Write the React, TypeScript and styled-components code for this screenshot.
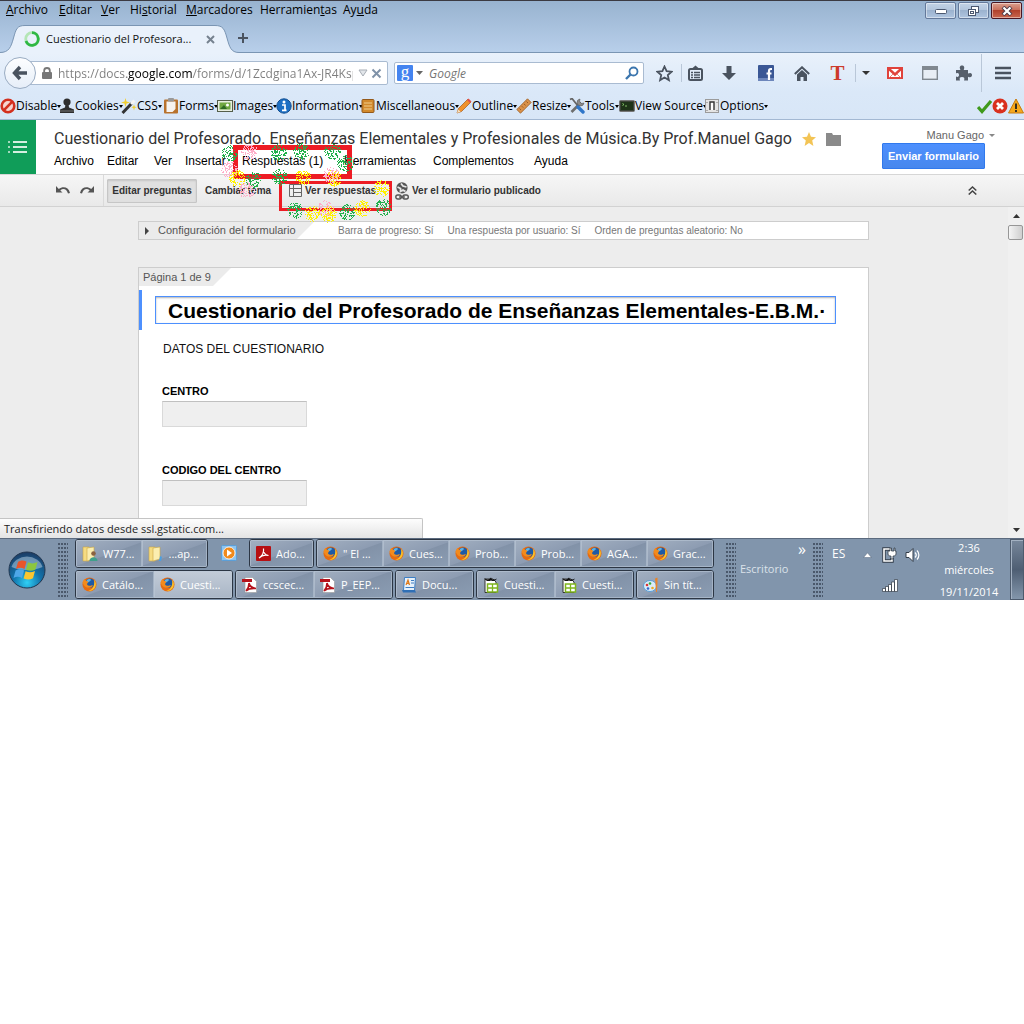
import React from "react";
import styled, { createGlobalStyle, css } from "styled-components";

const ui = `"Open Sans", "Noto Sans", sans-serif`;
const arial = `"Liberation Sans", Arial, sans-serif`;

const Global = createGlobalStyle`
  *, *::before, *::after { box-sizing: border-box; }
  body { margin: 0; background: #fff; font-family: ${arial}; }
  h1, h2, p { margin: 0; }
  button, input { font: inherit; color: inherit; }
  button { border: 0; padding: 0; background: none; white-space: nowrap; cursor: pointer; }
  svg { display: block; flex: none; }
`;

const Screen = styled.div`
  display: flex;
  flex-direction: column;
  width: 100%;
  overflow: hidden;
`;

/* ---------- Window frame ---------- */

const Frame = styled.header`
  border-top: 1px solid #3b3a42;
  border-bottom: 1px solid #7a95b3;
  background: linear-gradient(#98b3d0, #b8cfea);
  font-family: ${ui};
  font-size: 12px;
`;

const FrameTop = styled.div`
  display: flex;
  justify-content: space-between;
  align-items: flex-start;
  height: 24px;
`;

const MenuBar = styled.nav`
  display: flex;
  padding-left: 6px;
`;

const MenuEntry = styled.button<{ $w: number }>`
  width: ${(p) => p.$w}px;
  height: 18px;
  font-size: 12px;
  line-height: 18px;
  text-align: left;
  color: #000;
`;

const WindowControls = styled.div`
  display: flex;
  gap: 2px;
  padding: 1px 2px 0 0;
`;

const WindowButton = styled.button<{ $close?: boolean }>`
  display: grid;
  place-items: center;
  width: 31px;
  height: 17px;
  border: 1px solid ${(p) => (p.$close ? "#4a1622" : "#64799a")};
  border-radius: 2px;
  background: ${(p) =>
    p.$close
      ? "linear-gradient(#dba08f, #c9705c 45%, #b1412c 50%, #c9664f)"
      : "linear-gradient(#c3d3e6, #b3c6dd 45%, #9cb3cf 50%, #afc5e0)"};
  box-shadow: inset 0 0 0 1px rgba(255, 255, 255, 0.45);
`;

const TabStrip = styled.div`
  display: flex;
  align-items: flex-end;
  height: 27px;
`;

const Tab = styled.div`
  position: relative;
  display: flex;
  align-items: center;
  width: 235px;
  height: 28px;
  margin-bottom: -1px;
  padding-left: 24px;
`;

const TabShape = styled.svg`
  position: absolute;
  left: 0;
  top: 0;
`;

const TabLabel = styled.span`
  position: relative;
  width: 162px;
  padding-left: 6px;
  font-size: 11px;
  line-height: 20px;
  white-space: nowrap;
  color: #111;
`;

const Raised = styled.span`
  position: relative;
  display: flex;
`;

const IconButton = styled.button`
  position: relative;
  display: grid;
  place-items: center;
  width: 16px;
  height: 28px;
`;

/* ---------- Navigation bar ---------- */

const Chrome = styled.section`
  border-bottom: 1px solid #a3b8d3;
  background: linear-gradient(#e9f1fb, #dae8f8 60%, #d8e6f7);
  font-family: ${ui};
`;

const NavBar = styled.div`
  display: flex;
  align-items: center;
  height: 40px;
  padding-left: 4px;
`;

const Back = styled.button`
  display: grid;
  place-items: center;
  flex: none;
  z-index: 1;
  width: 32px;
  height: 32px;
  border: 1px solid #9aacc2;
  border-radius: 50%;
  background: linear-gradient(#fdfeff, #e6eef8);
`;

const AddressBar = styled.form`
  display: flex;
  align-items: center;
  flex: 1;
  min-width: 0;
  height: 24px;
  margin: 0 6px 0 -8px;
  padding: 0 3px 0 13px;
  border: 1px solid #a9bbd1;
  border-radius: 2px;
  background: #fff;
`;

const Address = styled.input`
  flex: 1;
  min-width: 0;
  height: 20px;
  margin: 0 5px 0 6px;
  padding: 0;
  border: 0;
  outline: 0;
  font-size: 12px;
  color: #7d7d7d;
  -webkit-text-fill-color: transparent;
  background: linear-gradient(90deg, #7d7d7d 69px, #000 69px 134px, #7d7d7d 134px);
  -webkit-background-clip: text;
  background-clip: text;
`;

const SearchBar = styled.form`
  display: flex;
  align-items: center;
  flex: none;
  width: 250px;
  height: 22px;
  padding: 0 4px 0 2px;
  border: 1px solid #a9bbd1;
  border-radius: 2px;
  background: #fff;
`;

const Engine = styled.button`
  display: flex;
  align-items: center;
  gap: 3px;
`;

const EngineLogo = styled.span`
  width: 16px;
  height: 16px;
  border-radius: 1px;
  background: #4484f0;
  color: #fff;
  font-family: "Liberation Serif", serif;
  font-size: 17px;
  line-height: 13px;
  text-align: center;
`;

const SearchInput = styled.input`
  flex: 1;
  min-width: 0;
  height: 18px;
  padding: 0 6px;
  border: 0;
  outline: 0;
  background: none;
  font-size: 12px;
  &::placeholder {
    color: #757575;
    font-style: italic;
    opacity: 1;
  }
`;

const Tools = styled.div`
  display: flex;
  align-items: center;
  flex: none;
  height: 40px;
  margin-left: 4px;
`;

const Tool = styled.button<{ $w: number }>`
  display: grid;
  place-items: center;
  width: ${(p) => p.$w}px;
  height: 28px;
`;

const ToolRule = styled.span<{ $tall?: boolean }>`
  width: 1px;
  height: ${(p) => (p.$tall ? 38 : 18)}px;
  background: #b9c7d8;
`;

const LetterT = styled.span`
  font-family: "Liberation Serif", serif;
  font-weight: bold;
  font-size: 21px;
  line-height: 20px;
  color: #cc3a2b;
`;

/* ---------- Developer toolbar ---------- */

const DevBar = styled.div`
  display: flex;
  align-items: center;
  height: 26px;
`;

const DevButton = styled.button<{ $w: number }>`
  display: flex;
  align-items: center;
  flex: none;
  width: ${(p) => p.$w}px;
  height: 20px;
  font-size: 12px;
  line-height: 20px;
  color: #000;
`;

const DevCaret = styled.span`
  border: 2px solid transparent;
  border-top: 3px solid #000;
  border-bottom: 0;
`;

const DevStatus = styled.div`
  display: flex;
  margin-left: auto;
`;

/* ---------- Forms header ---------- */

const FormsHeader = styled.header`
  display: flex;
  border-bottom: 1px solid #d6d6d6;
  background: #fff;
`;

const HomeTile = styled.a`
  display: grid;
  place-items: center;
  flex: none;
  width: 36px;
  height: 54px;
  background: #109d59;
`;

const HeaderMain = styled.div`
  flex: 1;
  min-width: 0;
  padding: 8px 0 0 18px;
`;

const TitleRow = styled.div`
  display: flex;
  align-items: center;
  gap: 10px;
  height: 22px;
`;

const DocTitle = styled.h1`
  font-family: Roboto, ${arial};
  font-size: 16px;
  line-height: 22px;
  font-weight: normal;
  white-space: nowrap;
  color: #333;
`;

const DocMenu = styled.nav`
  display: flex;
  padding-top: 3px;
`;

const DocMenuItem = styled.button<{ $w: number }>`
  width: ${(p) => p.$w}px;
  font-size: 12px;
  line-height: 16px;
  text-align: left;
  color: #000;
`;

const Account = styled.div`
  display: flex;
  flex-direction: column;
  align-items: flex-end;
  padding-right: 39px;
`;

const AccountName = styled.button`
  display: flex;
  align-items: center;
  gap: 5px;
  height: 16px;
  margin: 7px -10px 0 0;
  font-size: 11px;
  color: #666;
`;

const SendButton = styled.button`
  width: 103px;
  height: 26px;
  border: 1px solid #3079ed;
  border-radius: 1px;
  background: linear-gradient(#4d90fe, #4787ed);
  font-size: 11px;
  font-weight: bold;
  color: #fff;
`;

const Toolbar = styled.div`
  display: flex;
  align-items: center;
  height: 32px;
  border-bottom: 1px solid #d2d2d2;
  background: linear-gradient(#f6f6f6, #e9e9e9);
`;

const History = styled.div`
  display: flex;
  align-items: center;
  justify-content: flex-end;
  gap: 8px;
  width: 104px;
  height: 31px;
  padding-right: 8px;
  border-right: 1px solid #dadada;
`;

const ToolbarButton = styled.button<{ $pressed?: boolean; $w: number }>`
  display: flex;
  align-items: center;
  gap: 3px;
  width: ${(p) => p.$w}px;
  height: 24px;
  font-size: 10px;
  font-weight: bold;
  color: #333;
  ${(p) =>
    p.$pressed &&
    css`
      justify-content: center;
      margin: 0 8px 0 3px;
      border: 1px solid #c6c6c6;
      border-radius: 1px;
      background: #e0e0e0;
      box-shadow: inset 0 1px 2px rgba(0, 0, 0, 0.12);
    `}
`;

const CollapseButton = styled(IconButton)`
  margin: 0 44px 0 auto;
`;

/* ---------- Canvas ---------- */

const Viewport = styled.main`
  position: relative;
  display: flex;
  height: 331px;
  overflow: hidden;
  background: #ededed;
`;

const Canvas = styled.div`
  flex: 1;
  min-width: 0;
  padding: 14px 139px 0 138px;
`;

const SettingsBar = styled.div`
  display: flex;
  height: 19px;
  border: 1px solid #cdcdcd;
  background: #fff;
  font-size: 10px;
  line-height: 17px;
  white-space: nowrap;
  color: #777;
`;

const SettingsToggle = styled.button`
  display: flex;
  align-items: center;
  gap: 9px;
  width: 175px;
  padding-left: 6px;
  background: #ebebeb;
  clip-path: polygon(0 0, 100% 0, calc(100% - 17px) 100%, 0 100%);
  font-size: 11px;
  color: #555;
`;

const Setting = styled.span`
  margin-left: 14px;
  &:nth-of-type(1) { margin-left: 24px; }
`;

const Sheet = styled.section`
  height: 320px;
  margin-top: 27px;
  border: 1px solid #cdcdcd;
  background: #fff;
`;

const PageTag = styled.h2`
  width: 92px;
  height: 18px;
  padding-left: 4px;
  background: #ebebeb;
  clip-path: polygon(0 0, 100% 0, calc(100% - 18px) 100%, 0 100%);
  font-size: 11px;
  line-height: 19px;
  font-weight: normal;
  color: #555;
`;

const TitleBlock = styled.div`
  height: 40px;
  margin-top: 4px;
  padding: 6px 32px 6px 13px;
  border-left: 3px solid #4d90fe;
`;

const TitleInput = styled.input`
  display: block;
  width: 100%;
  height: 28px;
  padding: 1px 6px 0 12px;
  border: 1px solid #4d90fe;
  outline: 0;
  box-shadow: inset 0 1px 2px rgba(0, 0, 0, 0.3);
  background: #fff;
  font-size: 21px;
  font-weight: bold;
  color: #000;
`;

const Description = styled.p`
  padding: 11px 24px 0;
  font-size: 12px;
  line-height: 16px;
  color: #111;
`;

const Question = styled.div`
  display: flex;
  flex-direction: column;
  align-items: flex-start;
  gap: 2px;
  padding: 26px 0 0 23px;
  & + & { padding-top: 35px; }
`;

const QuestionLabel = styled.label`
  font-size: 11px;
  line-height: 16px;
  font-weight: bold;
  color: #000;
`;

const Answer = styled.input`
  width: 145px;
  height: 26px;
  border: 1px solid #d9d9d9;
  border-top-color: #c0c0c0;
  background: #efefef;
`;

const ScrollBar = styled.div`
  display: flex;
  flex-direction: column;
  width: 16px;
  background: #f0f0f0;
`;

const ScrollArrow = styled.button`
  display: grid;
  place-items: center;
  height: 17px;
`;

const ScrollThumb = styled.div`
  flex: none;
  width: 15px;
  height: 15px;
  margin-top: 1px;
  border: 1px solid #979797;
  border-radius: 2px;
  background: linear-gradient(90deg, #f5f5f5, #e2e2e2 50%, #cfcfcf);
`;

const ScrollTrack = styled.div`
  flex: 1;
`;

const StatusText = styled.p`
  position: absolute;
  left: 0;
  bottom: 0;
  width: 423px;
  height: 20px;
  padding-left: 4px;
  border: 1px solid #c4c4c4;
  border-width: 1px 1px 0 0;
  border-radius: 0 2px 0 0;
  background: linear-gradient(#fdfdfd, #e4e4e4);
  font-family: ${ui};
  font-size: 11px;
  line-height: 20px;
  color: #222;
`;

/* ---------- Marks drawn over the page ---------- */

const Marks = styled.svg`
  position: absolute;
  left: 220px;
  top: 140px;
  pointer-events: none;
`;

/* ---------- Taskbar ---------- */

const TaskBar = styled.footer`
  display: flex;
  height: 62px;
  border-top: 1px solid #5b6a7e;
  background: #8195ac;
  font-family: ${ui};
  font-size: 11px;
  color: #fff;
`;

const Start = styled.button`
  display: grid;
  place-items: center;
  width: 54px;
  height: 61px;
`;

const Grip = styled.span<{ $l: number; $r: number }>`
  flex: none;
  width: 10px;
  height: 54px;
  margin: 4px ${(p) => p.$r}px 0 ${(p) => p.$l}px;
  background: radial-gradient(circle at 1px 1px, #4a586b 1px, transparent 1px) 0 0 / 3px 4px;
`;

const TaskRows = styled.div`
  display: flex;
  flex-direction: column;
  gap: 2px;
`;

const TaskRow = styled.div`
  display: flex;
  gap: 2px;
`;

const TaskGroup = styled.div<{ $w: number }>`
  display: flex;
  width: ${(p) => p.$w}px;
  height: 29px;
  border: 1px solid #2c3644;
  border-radius: 3px;
  box-shadow: inset 0 0 0 1px #b4c0cf;
  overflow: hidden;
`;

const Task = styled.button<{ $active?: boolean }>`
  display: flex;
  align-items: center;
  gap: 5px;
  flex: 1;
  min-width: 0;
  padding-left: 6px;
  color: #fff;
  box-shadow: inset 0 0 0 1px rgba(190, 202, 216, 0.55);
  background: ${(p) =>
    p.$active
      ? "linear-gradient(#c3ccd8, #a9b6c6)"
      : "linear-gradient(160deg, #a3b0c1, #8d9cb2 50%, #8292a8 52%, #8b9db3)"};
`;

const QuickTask = styled.button`
  display: grid;
  place-items: center;
  width: 37px;
  height: 27px;
`;

const Desktop = styled.div`
  display: flex;
  flex-direction: column;
  gap: 2px;
  width: 66px;
  line-height: 16px;
  color: #dbe2ea;
`;

const More = styled.button`
  align-self: flex-end;
  height: 20px;
  font-size: 16px;
  line-height: 16px;
  color: #fff;
`;

const Tray = styled.div`
  display: flex;
  margin-left: auto;
`;

const Lang = styled.span`
  width: 30px;
  padding-top: 7px;
  font-size: 12px;
  line-height: 16px;
`;

const TrayArrow = styled.button`
  display: grid;
  place-items: center;
  width: 10px;
  height: 32px;
`;

const TrayIcons = styled.div`
  display: grid;
  grid-template-columns: 23px 23px;
  grid-template-rows: 31px 30px;
  align-items: center;
  margin-left: 10px;
`;

const Clock = styled.time`
  display: flex;
  flex-direction: column;
  gap: 6px;
  width: 82px;
  padding-top: 1px;
  line-height: 16px;
  text-align: center;
`;

const ShowDesktop = styled.button`
  width: 14px;
  height: 61px;
  border: 1px solid #4d5b6d;
  box-shadow: inset 1px 1px 0 #a3b1c2;
  background: linear-gradient(#77879b, #4e5e73 50%, #8396ab);
`;

/* ---------- Drawings ---------- */

const slate = "#4a535f";

function Firefox() {
  return (
    <svg width="15" height="15" viewBox="0 0 16 16">
      <circle cx="8" cy="8" r="7.5" fill="#e66b12" />
      <circle cx="8.6" cy="6.6" r="5" fill="#1d5aa6" />
      <path d="M5 3.500c2-1.800 4-1.500 5 0-1 .4-2 .4-2 1.600L5.500 6z" fill="#5fb4e6" />
      <path d="M.6 6C1 4 2 2.500 3.200 1.800 3 3 3.600 4 5 4.300L6.800 5 5.600 6.800c-.6 1 .4 2.400 2 2.600 2 .2 3-.8 4-.4-1 2-3.500 3-5.600 2.400C3 10.600 1.500 8 .6 6z" fill="#f28b1d" />
      <path d="M13 3c2.200 2.600 2.400 6 .6 8.700-1.600 2.400-4.600 3.600-7.200 3 4-.4 7.400-4 6.600-11.700z" fill="#f9c22b" />
    </svg>
  );
}

function Folder({ person }: { person?: boolean }) {
  return (
    <svg width="16" height="16" viewBox="0 0 16 16">
      <path d="M1 1h6v14H1z" fill="#f5dc82" stroke="#c9a544" strokeWidth=".6" />
      <path d="M5 2l7-1v12l-7 2z" fill="#fbeeb0" stroke="#c9a544" strokeWidth=".6" />
      {person ? (
        <>
          <circle cx="11.500" cy="7.500" r="2.300" fill="#8a6240" />
          <path d="M7.500 15c0-5 8-5 8 0z" fill="#3fa08b" />
        </>
      ) : (
        <path d="M12 10l2 1-1 4h-2z" fill="#4c9fe0" />
      )}
    </svg>
  );
}

function PdfPage() {
  return (
    <svg width="16" height="16" viewBox="0 0 16 16">
      <path d="M3 .5h7.500l4 4v11H3z" fill="#fff" stroke="#999" strokeWidth=".6" />
      <path d="M0 2h10v3H0z" fill="#b5121b" />
      <path d="M7 6c1 4 3 5 7 5.500M7 6c0 4-1 6-3 8 2-2 5-3 10-2.500" fill="none" stroke="#b5121b" strokeWidth="1.600" />
    </svg>
  );
}

function Acrobat() {
  return (
    <svg width="15" height="15" viewBox="0 0 15 15">
      <rect width="15" height="15" rx="1" fill="#b70f12" />
      <path d="M3 12c3-2 5-6 4.500-9.500C7 6 9 9 12.500 9.500 9 8.500 6 9 3 12z" fill="none" stroke="#fff" strokeWidth="1.200" />
    </svg>
  );
}

function Player() {
  return (
    <svg width="16" height="16" viewBox="0 0 16 16">
      <rect x=".5" y=".5" width="15" height="15" rx="1" fill="#8fc4ee" stroke="#5b9fd8" />
      <circle cx="8" cy="8" r="6" fill="#f08a1c" stroke="#fff" strokeWidth=".8" />
      <path d="M6 4.500l5 3.500-5 3.500z" fill="#fff" />
    </svg>
  );
}

function WordPad() {
  return (
    <svg width="15" height="16" viewBox="0 0 15 16">
      <path d="M2.500 .5h11l-1 13h-11z" fill="#e6f1fb" stroke="#3e7fc4" />
      <path d="M0 13h13l1 2.500H1z" fill="#2f6fb5" />
      <path d="M4 8l2-5 1.500 5M4.800 6.300h2.200" fill="none" stroke="#e07b1a" strokeWidth="1.200" />
      <path d="M9 3.500h3M9 6h3M3.500 10.500h8.500" stroke="#3e7fc4" strokeWidth="1.200" />
    </svg>
  );
}

function Calc() {
  return (
    <svg width="16" height="16" viewBox="0 0 16 16">
      <path d="M2 2h8l3 3v10.500H2z" fill="#fff" stroke="#333" />
      <path d="M1 1c3 2 5 2 7-.5 1 3 4 2 6 1-2 3-4 3-6 2-2 1-5 1-7-2.500z" fill="#111" />
      <rect x="4.500" y="7" width="10" height="8" fill="#fff" stroke="#7fb51e" strokeWidth="1.500" />
      <path d="M9.500 7v8M4.500 11h10" stroke="#7fb51e" strokeWidth="1.300" />
    </svg>
  );
}

function Paint() {
  return (
    <svg width="16" height="16" viewBox="0 0 16 16">
      <ellipse cx="7" cy="9" rx="6.500" ry="5.500" fill="#d9ecf8" stroke="#5b9fd8" />
      <circle cx="4" cy="8" r="1.300" fill="#d33" />
      <circle cx="7" cy="6.500" r="1.300" fill="#3a3" />
      <circle cx="5" cy="11.500" r="1.300" fill="#36c" />
      <circle cx="9.500" cy="11" r="1.300" fill="#ea2" />
      <path d="M12 1.500l2.500-1V6l-.5 9h-1l-.5-9z" fill="#e8842a" />
    </svg>
  );
}

function StartOrb() {
  return (
    <svg width="38" height="38" viewBox="0 0 38 38">
      <defs>
        <radialGradient id="orb" cx="50%" cy="85%" r="85%">
          <stop offset="0" stopColor="#2fd0f5" />
          <stop offset=".45" stopColor="#1273ab" />
          <stop offset="1" stopColor="#1d3b63" />
        </radialGradient>
      </defs>
      <circle cx="19" cy="19" r="18" fill="url(#orb)" stroke="#22364f" />
      <path d="M3.500 16a16 14 0 0 1 31 0c-8 4-23 4-31 0z" fill="#d5e2ef" opacity=".45" />
      <path d="M10 11c3-2 5-2 8.500-.4L16.500 18c-3-1.600-5.500-1.500-8.500 0z" fill="#e8552b" />
      <path d="M20 11.300c3 1.500 6 1.500 9.500-.3L27.400 18.500c-3 1.600-6 1.700-9.400.2z" fill="#8cc63e" />
      <path d="M7.600 19.500c3-1.600 5.500-1.500 8.500 0L14 27c-3-1.600-5.500-1.500-8.500 0z" fill="#4ea7e8" />
      <path d="M17.600 20.200c3 1.500 6 1.500 9.400-.3L25 27.300c-3 1.700-6 1.700-9.400.2z" fill="#fbc62f" />
    </svg>
  );
}

const devIcons: Record<string, React.ReactNode> = {
  Disable: (
    <>
      <circle cx="8" cy="8" r="6.300" fill="#f6d5d0" stroke="#d3301f" strokeWidth="2.600" />
      <path d="M12.300 3.700l-8.600 8.600" stroke="#d3301f" strokeWidth="2.600" />
    </>
  ),
  Cookies: (
    <>
      <circle cx="8" cy="4" r="3.600" fill="#2e2e2e" />
      <path d="M6.500 6h3l.5 3.500 5 2v3.500H1v-3.500l5-2z" fill="#2e2e2e" />
      <path d="M1 13h14" stroke="#777" />
    </>
  ),
  CSS: (
    <>
      <path d="M1.500 15L11 5" stroke="#333" strokeWidth="3" />
      <path d="M10 6l3.500-3.500" stroke="#f4f4f4" strokeWidth="3" />
      <path d="M4.500 0l1 3.500 3.500 1-3.500 1-1 3.500-1-3.500-3.500-1 3.500-1zM13 6.500l.7 2 2 .7-2 .7-.7 2.600-.7-2.600-2-.7 2-.7z" fill="#f2cf2e" />
    </>
  ),
  Forms: (
    <>
      <rect x="1" y="1.500" width="14" height="14" rx="1" fill="#b8722c" />
      <path d="M3.500 3.500h9V11l-3 3h-6z" fill="#f6f3ef" />
      <rect x="5" y="0" width="6" height="3.500" rx="1" fill="#999" />
    </>
  ),
  Images: (
    <>
      <rect x=".5" y="2.500" width="15" height="11" fill="#e9efe2" stroke="#555f4b" />
      <rect x="2.500" y="4.500" width="11" height="7" fill="#72a843" />
      <path d="M3 11l4-4 3 4z" fill="#2f6b25" />
      <circle cx="10.500" cy="7" r="1.500" fill="#fff" />
    </>
  ),
  Information: (
    <>
      <circle cx="8" cy="8" r="7.200" fill="#1c6fc4" stroke="#124f91" />
      <circle cx="8" cy="4" r="1.500" fill="#fff" />
      <path d="M6 7h3v5h1.200M6 12.400h4.500" fill="none" stroke="#fff" strokeWidth="1.700" />
    </>
  ),
  Miscellaneous: (
    <>
      <rect x="2" y="1.500" width="12" height="13" rx="1" fill="#d28a2d" stroke="#94591a" />
      <path d="M4 5h8M4 8h8M4 11h8" fill="none" stroke="#f0cd8c" />
    </>
  ),
  Outline: (
    <>
      <path d="M1 15l1.500-4.500L12 1l3 3-9.500 9.500z" fill="#f0922c" stroke="#a5591b" strokeWidth=".7" />
      <path d="M11 2l1.500-1.500 3 3L14 5z" fill="#e2504b" />
      <path d="M1 15l1.200-3.600 2.500 2.400z" fill="#f5e2c3" />
    </>
  ),
  Resize: (
    <>
      <path d="M.8 11.500L11.500.8l3.700 3.700L4.500 15.200z" fill="#d99149" stroke="#9b5c22" strokeWidth=".8" />
      <path d="M5 12l-1.500-1.500M7.300 9.700L5.800 8.200M9.600 7.400L8 6M12 5l-1.500-1.500" stroke="#8a4f1b" strokeWidth=".8" />
    </>
  ),
  Tools: (
    <>
      <path d="M2.500 14L12 4.500" stroke="#6e6e6e" strokeWidth="2.600" />
      <path d="M11 1a3.500 3.500 0 1 0 4 4l-2.500.5-2-2z" fill="#8a8a8a" stroke="#555" strokeWidth=".6" />
      <path d="M1 1.500l2-1 6 7.500" stroke="#666" strokeWidth="1.800" fill="none" />
      <path d="M9 9l5 5" stroke="#2f76c9" strokeWidth="3.400" strokeLinecap="round" />
    </>
  ),
  "View Source": (
    <>
      <rect x=".5" y="2.500" width="15" height="11" rx="1" fill="#3c4338" stroke="#777" />
      <rect x="2" y="4" width="12" height="8" fill="#1e3318" />
      <path d="M3.500 5.500l1.500 1-1.500 1M6 8h2" stroke="#8fd070" fill="none" strokeWidth=".9" />
    </>
  ),
  Options: (
    <>
      <rect x="1.500" y="1.500" width="13" height="13" fill="#e4e4e4" stroke="#9b9b9b" />
      <path d="M6 12V4h4v8" fill="#fff" stroke="#333" strokeWidth="1.400" />
      <path d="M3 4v1M13 4v1M3 12v1M13 12v1" stroke="#777" />
    </>
  ),
};

const devItems: [string, number][] = [
  ["Disable", 59], ["Cookies", 62], ["CSS", 42], ["Forms", 54], ["Images", 59], ["Information", 84],
  ["Miscellaneous", 96], ["Outline", 60], ["Resize", 53], ["Tools", 50], ["View Source", 85], ["Options", 66],
];

const menus: [string, string, string, number][] = [
  ["", "A", "rchivo", 53], ["", "E", "ditar", 42], ["", "V", "er", 29], ["Hi", "s", "torial", 56],
  ["", "M", "arcadores", 74], ["Herramien", "t", "as", 83], ["Ay", "u", "da", 40],
];

const docMenus: [string, number][] = [
  ["Archivo", 53], ["Editar", 47], ["Ver", 31], ["Insertar", 57], ["Respuestas (1)", 102],
  ["Herramientas", 89], ["Complementos", 101], ["Ayuda", 36],
];

const sprays: [number, number, string][] = [
  [229, 153, "#22b14c"], [229, 169, "#ffaec9"], [249, 152, "#ffaec9"], [278, 152, "#22b14c"], [301, 151, "#22b14c"],
  [332, 151, "#22b14c"], [345, 163, "#22b14c"], [237, 178, "#fff200"], [253, 179, "#22b14c"], [279, 177, "#22b14c"],
  [303, 177, "#fff200"], [333, 178, "#fff200"], [331, 175, "#ffaec9"], [246, 190, "#ffaec9"], [381, 188, "#fff200"],
  [295, 210, "#22b14c"], [312, 213, "#fff200"], [325, 208, "#ffaec9"], [328, 214, "#fff200"], [347, 212, "#22b14c"],
  [362, 208, "#fff200"], [383, 207, "#22b14c"],
];

function sprayPath(cx: number, cy: number, seed: number) {
  let s = seed * 7919 + 17;
  const rnd = () => {
    s = (s * 1103515245 + 12345) % 2147483648;
    return s / 2147483648;
  };
  let d = "";
  for (let i = 0; i < 105; i++) {
    const a = rnd() * Math.PI * 2;
    const r = Math.sqrt(rnd()) * 8;
    d += `M${Math.round(cx - 220 + r * Math.cos(a))} ${Math.round(cy - 140 + r * Math.sin(a))}h1v1h-1z`;
  }
  return d;
}

function TaskItem({ icon, label, active }: { icon: React.ReactNode; label: string; active?: boolean }) {
  return (
    <Task $active={active}>
      {icon}
      {label}
    </Task>
  );
}

export default function App() {
  return (
    <Screen>
      <Global />
      <Frame>
        <FrameTop>
          <MenuBar>
            {menus.map(([a, key, b, w]) => (
              <MenuEntry key={key} $w={w}>{a}<u>{key}</u>{b}</MenuEntry>
            ))}
          </MenuBar>
          <WindowControls>
            <WindowButton aria-label="Minimizar">
              <svg width="12" height="6"><rect x=".5" y="1.500" width="11" height="4" rx="1" fill="#fff" stroke="#4b5870" /></svg>
            </WindowButton>
            <WindowButton aria-label="Restaurar">
              <svg width="13" height="12" fill="#fff" stroke="#4b5870">
                <rect x="4.500" y="1.500" width="7" height="6" /><rect x="1.500" y="4.500" width="7" height="6" /><rect x="3.500" y="6.500" width="3" height="2" />
              </svg>
            </WindowButton>
            <WindowButton $close aria-label="Cerrar">
              <svg width="12" height="10"><path d="M2 1l8 8M10 1L2 9" stroke="#4b3a48" strokeWidth="4" /><path d="M2.500 1.500l7 7M9.500 1.500l-7 7" stroke="#fff" strokeWidth="2.200" /></svg>
            </WindowButton>
          </WindowControls>
        </FrameTop>
        <TabStrip>
          <Tab>
            <TabShape width="240" height="28">
              <path d="M0 27.500C9 27.500 11 22 13.500 13S17 .5 25 .5H215C223 .5 224.500 4 227 13S231 27.500 239 27.500V28H0z" fill="#e9f1fb" />
              <path d="M0 27.500C9 27.500 11 22 13.500 13S17 .5 25 .5H215C223 .5 224.500 4 227 13S231 27.500 239 27.500" fill="none" stroke="#7a95b3" />
            </TabShape>
            <Raised>
              <svg width="16" height="16" fill="none" strokeWidth="2.800">
                <circle cx="8" cy="8" r="6.300" stroke="#b4e6b6" />
                <path d="M8 1.700A6.300 6.300 0 1 1 2 10" stroke="#2fb844" />
              </svg>
            </Raised>
            <TabLabel>Cuestionario del Profesora...</TabLabel>
            <IconButton aria-label="Cerrar pestaña">
              <svg width="9" height="9"><path d="M1 1l7 7M8 1L1 8" stroke="#76828f" strokeWidth="2" /></svg>
            </IconButton>
          </Tab>
          <IconButton aria-label="Nueva pestaña">
            <svg width="12" height="12"><path d="M6 1v10M1 6h10" stroke={slate} strokeWidth="2" /></svg>
          </IconButton>
        </TabStrip>
      </Frame>

      <Chrome>
        <NavBar>
          <Back aria-label="Atrás">
            <svg width="16" height="16"><path d="M8 2L2.500 8 8 14M3 8h12" fill="none" stroke={slate} strokeWidth="3.400" /></svg>
          </Back>
          <AddressBar onSubmit={(e) => e.preventDefault()}>
            <svg width="10" height="12"><rect y="5" width="10" height="7" rx="1" fill="#777" /><path d="M2.200 6V3.500a2.800 2.500 0 0 1 5.600 0V6" fill="none" stroke="#777" strokeWidth="1.800" /></svg>
            <Address aria-label="Dirección" defaultValue="https://docs.google.com/forms/d/1Zcdgina1Ax-JR4KspLm8" />
            <svg width="10" height="8"><path d="M1 1h8L5 7z" fill="#e2e6ea" stroke="#a7adb5" /></svg>
            <IconButton type="button" aria-label="Detener">
              <svg width="11" height="11"><path d="M1.500 1.500l8 8M9.500 1.500l-8 8" stroke="#7f92a8" strokeWidth="2" /></svg>
            </IconButton>
          </AddressBar>
          <SearchBar onSubmit={(e) => e.preventDefault()}>
            <Engine type="button" aria-label="Motor de búsqueda">
              <EngineLogo>g</EngineLogo>
              <svg width="7" height="4"><path d="M0 0h7L3.500 4z" fill="#666" /></svg>
            </Engine>
            <SearchInput aria-label="Buscar" placeholder="Google" />
            <svg width="14" height="14" fill="none" stroke="#3c76ae"><circle cx="8.500" cy="5.500" r="4" strokeWidth="1.800" /><path d="M5.500 8.500L1 13" strokeWidth="2.400" /></svg>
          </SearchBar>
          <Tools>
            <Tool $w={33} aria-label="Marcador">
              <svg width="17" height="17" viewBox="0 0 17 17"><path d="M8.500 1.500l2.100 4.700 5 .5-3.800 3.400 1.100 5-4.400-2.600-4.400 2.600 1.100-5L1.400 6.700l5-.5z" fill="none" stroke={slate} strokeWidth="1.800" /></svg>
            </Tool>
            <ToolRule />
            <Tool $w={27} aria-label="Lista">
              <svg width="15" height="16"><rect x="1" y="4" width="13" height="11" rx="1.500" fill="none" stroke={slate} strokeWidth="2" /><path d="M4 3.500L7.500.5 11 3.500z" fill={slate} /><path d="M3 7.500h2M6 7.500h6M3 10h2M6 10h6M3 12.500h2M6 12.500h6" stroke={slate} strokeWidth="1.300" /></svg>
            </Tool>
            <Tool $w={39} aria-label="Descargas">
              <svg width="14" height="15"><path d="M4.500 0h5v7H14l-7 7-7-7h4.500z" fill={slate} /></svg>
            </Tool>
            <Tool $w={36} aria-label="Facebook">
              <svg width="16" height="16"><rect width="16" height="16" rx="1" fill="#3a5795" /><rect y="13" width="16" height="3" fill="#6d86bb" /><path d="M14 4h-1.200c-1.300 0-1.800.7-1.800 2V15M8.500 8.500h5" fill="none" stroke="#fff" strokeWidth="2.200" /></svg>
            </Tool>
            <Tool $w={36} aria-label="Inicio">
              <svg width="16" height="15"><path d="M.8 8L8 1.300 15.200 8" fill="none" stroke={slate} strokeWidth="2" /><path d="M3 8.500l5-4.500 5 4.500V15H9.500v-4h-3v4H3z" fill={slate} /></svg>
            </Tool>
            <Tool $w={35} aria-label="Texto"><LetterT>T</LetterT></Tool>
            <ToolRule />
            <Tool $w={20} aria-label="Más">
              <svg width="8" height="4"><path d="M0 0h8L4 4z" fill="#333" /></svg>
            </Tool>
            <Tool $w={38} aria-label="Gmail">
              <svg width="16" height="12"><rect x="1" y="1" width="14" height="10" fill="#fff" stroke="#e0433c" strokeWidth="2" /><path d="M1.500 1.500L8 7.500l6.500-6" fill="none" stroke="#e0433c" strokeWidth="2.400" /><path d="M2.500 10.500l3.500-3.500M13.500 10.500L10 7" stroke="#e9857f" /></svg>
            </Tool>
            <Tool $w={32} aria-label="Ventana">
              <svg width="16" height="14"><rect x=".7" y=".7" width="14.600" height="12.600" fill="#e8eef5" stroke="#808890" strokeWidth="1.400" /><path d="M0 2.500h16" stroke="#808890" strokeWidth="3" /></svg>
            </Tool>
            <Tool $w={35} aria-label="Complementos">
              <svg width="17" height="16"><path d="M1 5h4.500C4 2 5 .5 7 .5S10 2 8.700 5H13v3.500c3-1.500 4 0 4 1.500s-1 3-4 1.700V15.500H9c1-2.500 0-3.500-2-3.500s-3 1-2 3.500H1v-4c2 1 3 0 3-1.500S3 7.500 1 8.500z" fill="#565f6b" /></svg>
            </Tool>
            <ToolRule $tall />
            <Tool $w={42} aria-label="Menú">
              <svg width="16" height="14"><path d="M0 2h16M0 7h16M0 12h16" stroke={slate} strokeWidth="2.600" /></svg>
            </Tool>
          </Tools>
        </NavBar>
        <DevBar>
          {devItems.map(([name, w]) => (
            <DevButton key={name} $w={w}>
              <svg width="16" height="16" viewBox="0 0 16 16">{devIcons[name]}</svg>
              {name}
              <DevCaret />
            </DevButton>
          ))}
          <DevStatus>
            <svg width="15" height="16"><path d="M1 9l4 4.500L14 3" fill="none" stroke="#3f9a1c" strokeWidth="3.200" /></svg>
            <svg width="16" height="16"><circle cx="8" cy="8" r="7.500" fill="#d9301f" /><path d="M5 5l6 6M11 5l-6 6" stroke="#fff" strokeWidth="2.800" /></svg>
            <svg width="16" height="16"><path d="M8 1l7.500 14H.5z" fill="#f6a81c" stroke="#c67a10" /><path d="M8 5.500V11M8 12v2" stroke="#222" strokeWidth="1.800" /></svg>
          </DevStatus>
        </DevBar>
      </Chrome>

      <FormsHeader>
        <HomeTile href="#" aria-label="Inicio de Formularios">
          <svg width="20" height="14"><path d="M5 2h14M5 7h14M5 12h14" stroke="#d5eee0" strokeWidth="2" /><path d="M0 2h2M0 7h2M0 12h2" stroke="#a4d9bd" strokeWidth="2" /></svg>
        </HomeTile>
        <HeaderMain>
          <TitleRow>
            <DocTitle>Cuestionario del Profesorado. Enseñanzas Elementales y Profesionales de Música.By Prof.Manuel Gago</DocTitle>
            <svg width="14" height="14" viewBox="0 0 14 14"><path d="M7 0l2 4.800 5 .4-3.800 3.300L11.400 14 7 11l-4.400 3 1.200-5.500L0 5.200l5-.4z" fill="#f3c455" /></svg>
            <svg width="15" height="13"><path d="M0 0h6l1 2h8v11H0z" fill="#8a8a8a" /></svg>
          </TitleRow>
          <DocMenu>
            {docMenus.map(([m, w]) => <DocMenuItem key={m} $w={w}>{m}</DocMenuItem>)}
          </DocMenu>
        </HeaderMain>
        <Account>
          <AccountName>
            Manu Gago
            <svg width="6" height="3"><path d="M0 0h6L3 3z" fill="#888" /></svg>
          </AccountName>
          <SendButton>Enviar formulario</SendButton>
        </Account>
      </FormsHeader>
      <Toolbar>
        <History>
          <IconButton aria-label="Deshacer">
            <svg width="14" height="9"><path d="M0 0v6.500h6.500L4.300 4.500C7 2 10.500 2.800 12 7.500l2-.6C12.500 1 7 0 2.800 3z" fill="#555" /></svg>
          </IconButton>
          <IconButton aria-label="Rehacer">
            <svg width="14" height="9"><path d="M14 0v6.500H7.500l2.200-2C7 2 3.500 2.800 2 7.500L0 6.900C1.500 1 7 0 11.200 3z" fill="#555" /></svg>
          </IconButton>
        </History>
        <ToolbarButton $w={90} $pressed>Editar preguntas</ToolbarButton>
        <ToolbarButton $w={84}>Cambiar tema</ToolbarButton>
        <ToolbarButton $w={106}>
          <svg width="13" height="13" fill="none" stroke="#666"><path d="M.5 .5h12v12H.5zM.5 4.500h12M4.500 .5v12M4.500 8.500h8" /></svg>
          Ver respuestas
        </ToolbarButton>
        <ToolbarButton $w={155}>
          <svg width="14" height="18" fill="none" stroke="#555"><circle cx="7" cy="5.800" r="5.600" fill="#555" stroke="none" /><path d="M2.500 5l3 1.500v3L8 8l2.500 1.500M6 1.500L8 4l3.500 1" stroke="#e6e6e6" strokeWidth="1.800" /><rect x=".8" y="13" width="5.500" height="4" rx="2" strokeWidth="1.400" /><rect x="7.800" y="13" width="5.500" height="4" rx="2" strokeWidth="1.400" /><path d="M4 15h6" strokeWidth="1.300" /></svg>
          Ver el formulario publicado
        </ToolbarButton>
        <CollapseButton aria-label="Contraer">
          <svg width="9" height="9" fill="none" stroke="#444" strokeWidth="1.500"><path d="M.7 4.500L4.500 1l3.800 3.500M.7 8.500L4.500 5l3.800 3.500" /></svg>
        </CollapseButton>
      </Toolbar>

      <Viewport>
        <Canvas>
          <SettingsBar>
            <SettingsToggle>
              <svg width="4" height="8"><path d="M0 0l4 4-4 4z" fill="#444" /></svg>
              Configuración del formulario
            </SettingsToggle>
            <Setting>Barra de progreso: Sí</Setting>
            <Setting>Una respuesta por usuario: Sí</Setting>
            <Setting>Orden de preguntas aleatorio: No</Setting>
          </SettingsBar>
          <Sheet>
            <PageTag>Página 1 de 9</PageTag>
            <TitleBlock>
              <TitleInput aria-label="Título del formulario" defaultValue="Cuestionario del Profesorado de Enseñanzas Elementales-E.B.M.·" />
            </TitleBlock>
            <Description>DATOS DEL CUESTIONARIO</Description>
            <Question>
              <QuestionLabel htmlFor="centro">CENTRO</QuestionLabel>
              <Answer id="centro" />
            </Question>
            <Question>
              <QuestionLabel htmlFor="codigo">CODIGO DEL CENTRO</QuestionLabel>
              <Answer id="codigo" />
            </Question>
          </Sheet>
        </Canvas>
        <ScrollBar>
          <ScrollArrow aria-label="Subir"><svg width="7" height="4"><path d="M0 4h7L3.500 0z" fill="#333" /></svg></ScrollArrow>
          <ScrollThumb />
          <ScrollTrack />
          <ScrollArrow aria-label="Bajar"><svg width="7" height="4"><path d="M0 0h7L3.500 4z" fill="#333" /></svg></ScrollArrow>
        </ScrollBar>
        <StatusText>Transfiriendo datos desde ssl.gstatic.com...</StatusText>
      </Viewport>

      <Marks width="180" height="86" aria-hidden="true">
        <rect x="15.500" y="7.500" width="114" height="29" fill="none" stroke="#ed1c24" strokeWidth="5" />
        <rect x="60.500" y="42.500" width="110" height="27" fill="none" stroke="#ed1c24" strokeWidth="3" />
        <g shapeRendering="crispEdges">
          {sprays.map(([x, y, c], i) => <path key={i} d={sprayPath(x, y, i + 1)} fill={c} />)}
        </g>
      </Marks>

      <TaskBar>
        <Start aria-label="Inicio"><StartOrb /></Start>
        <Grip $l={4} $r={7} />
        <TaskRows>
          <TaskRow>
            <TaskGroup $w={133}>
              <TaskItem icon={<Folder person />} label="W77..." />
              <TaskItem icon={<Folder />} label="...ap..." />
            </TaskGroup>
            <QuickTask aria-label="Reproductor"><Player /></QuickTask>
            <TaskGroup $w={65}><TaskItem icon={<Acrobat />} label="Ado..." /></TaskGroup>
            <TaskGroup $w={398}>
              {['" El ...', "Cues...", "Prob...", "Prob...", "AGA...", "Grac..."].map((t, i) => <TaskItem key={i} icon={<Firefox />} label={t} />)}
            </TaskGroup>
          </TaskRow>
          <TaskRow>
            <TaskGroup $w={158}>
              <TaskItem icon={<Firefox />} label="Catálo..." />
              <TaskItem icon={<Firefox />} label="Cuesti..." active />
            </TaskGroup>
            <TaskGroup $w={158}>
              <TaskItem icon={<PdfPage />} label="ccscec..." />
              <TaskItem icon={<PdfPage />} label="P_EEP..." />
            </TaskGroup>
            <TaskGroup $w={79}><TaskItem icon={<WordPad />} label="Docu..." /></TaskGroup>
            <TaskGroup $w={158}>
              <TaskItem icon={<Calc />} label="Cuesti..." />
              <TaskItem icon={<Calc />} label="Cuesti..." />
            </TaskGroup>
            <TaskGroup $w={78}><TaskItem icon={<Paint />} label="Sin tít..." /></TaskGroup>
          </TaskRow>
        </TaskRows>
        <Tray>
          <Grip $l={0} $r={4} />
          <Desktop>
            <More aria-label="Más">»</More>
            Escritorio
          </Desktop>
          <Grip $l={7} $r={9} />
          <Lang>ES</Lang>
          <TrayArrow aria-label="Iconos ocultos"><svg width="9" height="6"><path d="M.5 5.500h8L4.500 .8z" fill="#fff" stroke="#55647a" strokeWidth=".5" /></svg></TrayArrow>
          <TrayIcons>
            <svg width="16" height="16"><path d="M8 2H2v12h8v-3" fill="none" stroke="#333c48" strokeWidth="3.400" /><path d="M8 2H2v12h8v-3" fill="none" stroke="#fff" strokeWidth="1.600" /><path d="M8 1v3H6v3c0 2 2 2 3 2v3h2V9c1 0 3 0 3-2V4h-1V1h-1v3H9.500V1z" fill="#fff" stroke="#333c48" strokeWidth=".8" /></svg>
            <svg width="17" height="16" fill="none"><path d="M1 5.500h3L8 1.500v13l-4-4H1z" fill="#fff" stroke="#333c48" /><path d="M10 5.500c1.500 1.500 1.500 3.500 0 5M12 3.500c2.500 2.500 2.500 6.500 0 9" stroke="#fff" strokeWidth="1.200" /></svg>
            <svg width="17" height="13" fill="#fff" stroke="#333c48" strokeWidth=".7"><path d="M.5 9.500h3v3h-3zM3.500 7.500h3v5h-3zM6.500 5.500h3v7h-3zM9.500 3h3v9.500h-3zM12.500 .5h3v12h-3z" /></svg>
          </TrayIcons>
          <Clock>
            <span>2:36</span>
            <span>miércoles</span>
            <span>19/11/2014</span>
          </Clock>
          <ShowDesktop aria-label="Mostrar escritorio" />
        </Tray>
      </TaskBar>
    </Screen>
  );
}
